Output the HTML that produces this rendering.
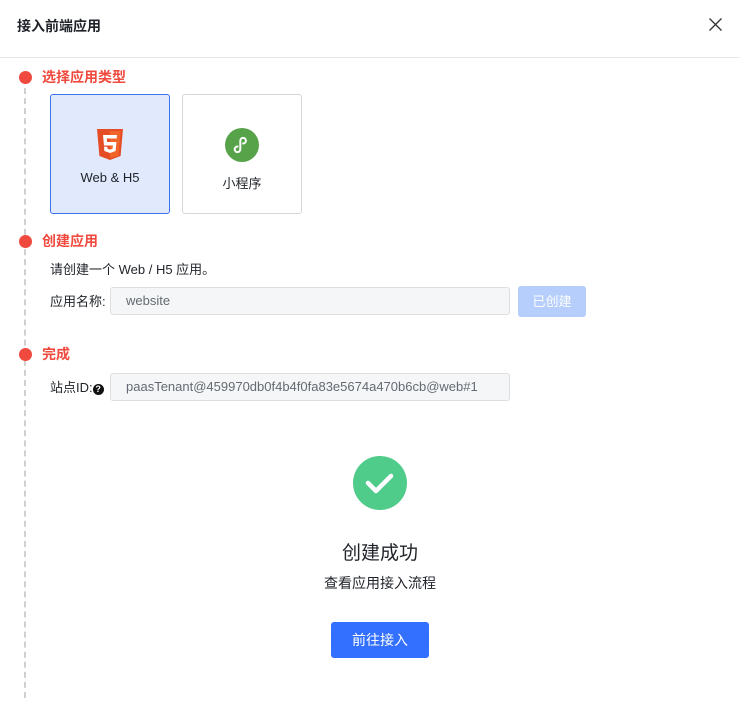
<!DOCTYPE html>
<html><head><meta charset="utf-8"><style>
*{margin:0;padding:0;box-sizing:border-box}
body{width:740px;height:719px;background:#fff;font-family:"Liberation Sans","Noto Sans CJK SC",sans-serif;color:#1f2329;position:relative;overflow:hidden}
.a{position:absolute}
.hd{left:17px;top:16px;font-size:14px;font-weight:bold;color:#1f2329}
.line{left:0;top:57px;width:740px;height:1px;background:#e8e8e8}
.dash{left:24px;top:88px;height:610px;border-left:2px dashed #d0d0d0}
.dot{width:13px;height:13px;border-radius:50%;background:#f04a3e;left:19px}
.st{left:42px;font-size:14px;font-weight:bold;color:#f04a3e}
.card{width:120px;height:120px;border:1px solid #d5d6d8;border-radius:3px;top:94px;text-align:center;font-size:13px}
.inp{left:110px;width:400px;height:28px;border:1px solid #dcdee0;border-radius:3px;background:#f5f6f7;font-size:13px;color:#646a73;padding-left:15px;line-height:26px}
.lb{font-size:13px;left:50px}
</style></head><body>
<div class="a hd">接入前端应用</div>
<svg class="a" style="left:708px;top:17px" width="15" height="15" viewBox="0 0 15 15"><path d="M1.5 1.5L13.5 13.5M13.5 1.5L1.5 13.5" stroke="#333" stroke-width="1.3"/></svg>
<div class="a line"></div>
<div class="a dash"></div>
<div class="a dot" style="top:71px"></div>
<div class="a st" style="top:67px">选择应用类型</div>
<div class="a card" style="left:50px;background:#e1eafd;border-color:#3a72f0">
<svg style="position:absolute;left:45px;top:34px" width="28" height="32" viewBox="0 0 28 32"><path d="M1 0h26l-2.4 27L14 31 3.4 27z" fill="#e44d26"/><path d="M14 2v27l8.6-2.4L24.6 2z" fill="#f16529"/><path d="M7 6h14l-.3 3.5H10.8l.3 3.5h9.3l-.8 9L14 24l-5.6-2-.4-4.2h3.3l.2 2 2.5.8 2.6-.8.3-3.3H8z" fill="#fff"/></svg>
<div style="position:absolute;top:75px;width:100%">Web &amp; H5</div></div>
<div class="a card" style="left:182px">
<svg style="position:absolute;left:42px;top:33px" width="34" height="34" viewBox="0 0 34 34"><circle cx="17" cy="17" r="17" fill="#56a349"/><path d="M12.5 18.5a2.8 2.8 0 1 0 2.8 2.8V12.7a2.8 2.8 0 1 1 2.8 2.8M21.5 15.5" stroke="#fff" stroke-width="2" fill="none" stroke-linecap="round"/><path d="M18.7 12.7v8.6a2.8 2.8 0 1 1-2.8-2.8" stroke="#fff" stroke-width="0" fill="none"/></svg>
<div style="position:absolute;top:78px;width:100%">小程序</div></div>
<div class="a dot" style="top:235px"></div>
<div class="a st" style="top:231px">创建应用</div>
<div class="a lb" style="top:259px">请创建一个 Web / H5 应用。</div>
<div class="a lb" style="top:291px">应用名称:</div>
<div class="a inp" style="top:287px">website</div>
<div class="a" style="left:518px;top:286px;width:68px;height:31px;background:#b5cefb;border-radius:3px;color:#fff;font-size:13px;text-align:center;line-height:31px">已创建</div>
<div class="a dot" style="top:348px"></div>
<div class="a st" style="top:344px">完成</div>
<div class="a lb" style="top:377px">站点ID:<span style="display:inline-block;width:11px;height:11px;border-radius:50%;background:#111;color:#fff;font-size:9px;line-height:11px;text-align:center;font-weight:bold;vertical-align:0px">?</span></div>
<div class="a inp" style="top:373px">paasTenant@459970db0f4b4f0fa83e5674a470b6cb@web#1</div>
<svg class="a" style="left:353px;top:456px" width="54" height="54" viewBox="0 0 54 54"><circle cx="27" cy="27" r="27" fill="#4fcb8a"/><path d="M15 27l8 8 15-15" stroke="#fff" stroke-width="4.5" fill="none" stroke-linecap="round" stroke-linejoin="round"/></svg>
<div class="a" style="left:0;width:760px;text-align:center;top:538px;font-size:19px">创建成功</div>
<div class="a" style="left:0;width:760px;text-align:center;top:573px;font-size:14px">查看应用接入流程</div>
<div class="a" style="left:331px;top:622px;width:98px;height:36px;background:#3370ff;border-radius:3px;color:#fff;font-size:14px;text-align:center;line-height:36px">前往接入</div>
</body></html>
